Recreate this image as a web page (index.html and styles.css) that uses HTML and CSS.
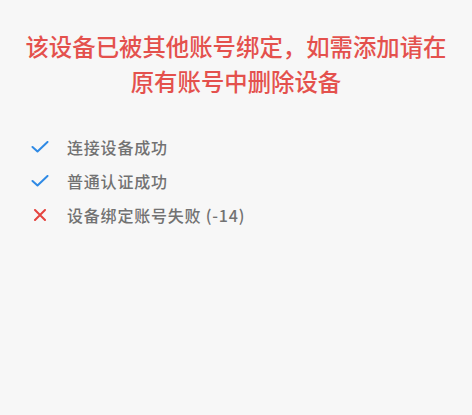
FILE: index.html
```html
<!DOCTYPE html>
<html lang="zh-CN">
<head>
  <meta charset="UTF-8">
  <title>设备绑定</title>
  <link rel="stylesheet" href="styles.css">
</head>
<body>

  <div class="page">
    <h2 class="error-title">该设备已被其他账号绑定，如需添加请在原有账号中删除设备</h2>

    <ul class="steps">
      <li class="step">
        <svg class="step-icon" viewBox="0 0 18 12" width="18" height="12">
          <path d="M1.5 6 L6.5 10.5 L16.5 1" fill="none" stroke="#2f8ae5" stroke-width="2" stroke-linecap="round" stroke-linejoin="round"/>
        </svg>
        <span>连接设备成功</span>
      </li>
      <li class="step">
        <svg class="step-icon" viewBox="0 0 18 12" width="18" height="12">
          <path d="M1.5 6 L6.5 10.5 L16.5 1" fill="none" stroke="#2f8ae5" stroke-width="2" stroke-linecap="round" stroke-linejoin="round"/>
        </svg>
        <span>普通认证成功</span>
      </li>
      <li class="step">
        <svg class="step-icon" viewBox="0 0 18 12" width="18" height="12">
          <path d="M4 1 L14 11 M14 1 L4 11" fill="none" stroke="#e5443f" stroke-width="2" stroke-linecap="round"/>
        </svg>
        <span>设备绑定账号失败 (-14)</span>
      </li>
    </ul>
  </div>

</body>
</html>
```

FILE: styles.css
```css
body {
  margin: 0;
  background-color: #f7f7f7;
  font-family: "Noto Sans CJK SC", "Noto Sans", sans-serif;
}

.page {
  width: 472px;
  height: 415px;
  padding-top: 29px;
  box-sizing: border-box;
}

.error-title {
  margin: 0 auto;
  width: 440px;
  text-align: center;
  color: #e4514d;
  font-size: 23.4px;
  font-weight: 500;
  line-height: 35px;
}

.steps {
  list-style: none;
  margin: 31px 0 0 0;
  padding: 0 0 0 31px;
}

.step {
  display: flex;
  align-items: center;
  height: 34px;
  color: #727272;
  font-size: 16px;
  font-weight: 500;
  letter-spacing: 0.8px;
}

.step-icon {
  margin-right: 18px;
}
```
